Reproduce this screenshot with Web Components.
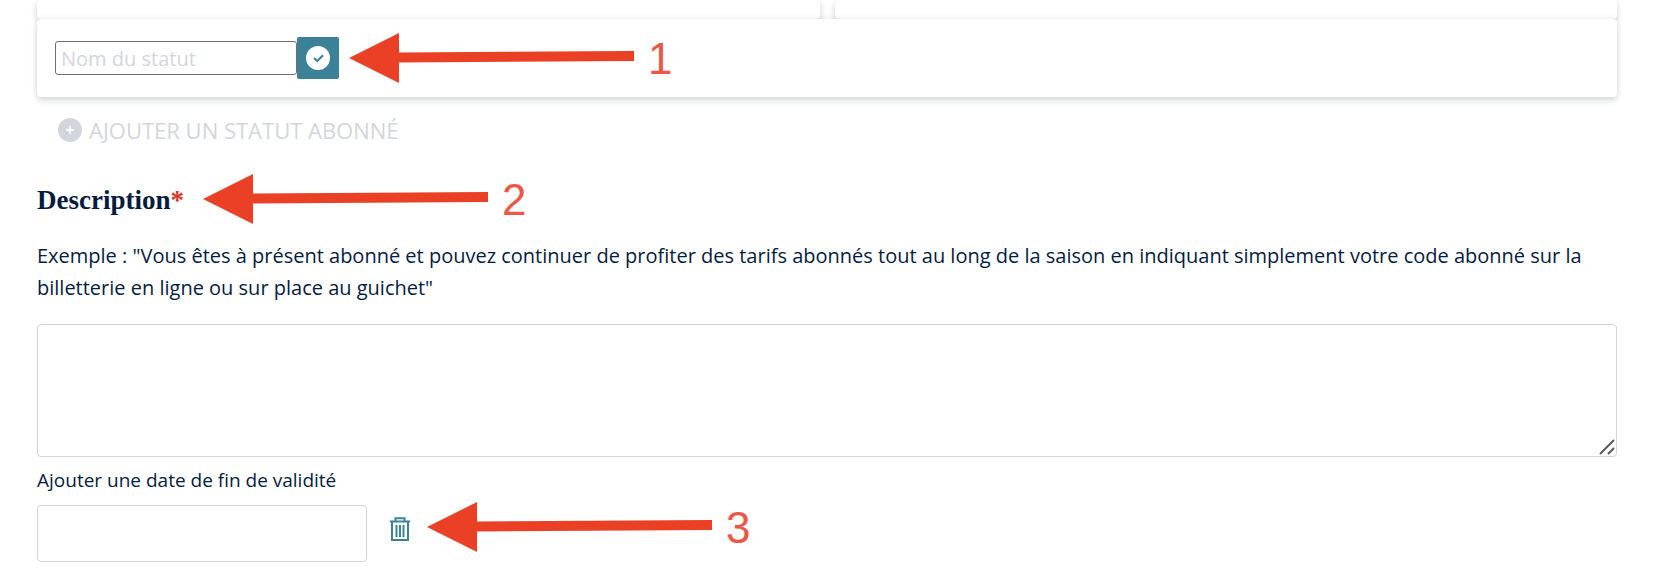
<!DOCTYPE html>
<html lang="fr">
<head>
<meta charset="utf-8">
<meta name="viewport" content="width=device-width, initial-scale=1">
<title>Statuts abonné</title>
<style>
    body{
        margin: 0;
        background: #ffffff;
        color: #051c3f;
        font-family: "Open Sans", "Noto Sans", sans-serif;
        font-size: 20px;
    }
</style>
</head>
<body>
<subscriber-form></subscriber-form>
<script>
'use strict'
const makeTemplate = (html) => {
    const template = document.createElement('template')
    template.innerHTML = html
    return template
}

const cardTemplate = makeTemplate(`
    <style>
        :host{
            display: block;
            position: relative;
            box-sizing: border-box;
            min-height: 19px;
            background: #ffffff;
            border-radius: 4px;
            box-shadow: 0 0 6px rgba(20,35,60,.1), 0 4px 6px rgba(20,35,60,.12);
        }
    </style>
    <slot></slot>
`)
class AppCard extends HTMLElement {
    constructor () {
        super ();
        this.attachShadow({mode:'open'})
        this.shadowRoot.appendChild(cardTemplate.content.cloneNode(true))
    }
}

// red arrow pointing left, followed by the step number
const stepTemplate = makeTemplate(`
    <style>
        :host{
            display: flex;
            align-items: center;
            gap: 14px;
            color: #ee5646;
            font-family: "Liberation Sans", Arial, sans-serif;
            font-size: 44px;
            line-height: 50px;
        }
        svg{
            display: block;
            flex: none;
        }
        span{
            padding-top: 2px;
            line-height: 48px;
        }
    </style>
    <svg width="285" height="50" viewBox="0 0 285 50" aria-hidden="true">
        <path fill="#ea4025" d="M0 25 50 0V19.5L285 18V28L50 29.5V50Z"/>
    </svg>
    <span><slot></slot></span>
`)
class StepArrow extends HTMLElement {
    constructor () {
        super ();
        this.attachShadow({mode:'open'})
        this.shadowRoot.appendChild(stepTemplate.content.cloneNode(true))
    }
}

const statusTemplate = makeTemplate(`
    <style>
        :host{
            display: flex;
            align-items: center;
            padding: 14px 18px;
        }
        input{
            box-sizing: border-box;
            width: 242px;
            height: 34px;
            padding: 0 5px;
            border: 1px solid #6f6f6f;
            border-radius: 3px;
            background: #ffffff;
            color: inherit;
            font: inherit;
            font-weight: 500;
        }
        input::placeholder{
            color: #d2d6dc;
        }
        button{
            display: flex;
            align-items: center;
            justify-content: center;
            width: 42px;
            height: 42px;
            padding: 0;
            border: 0;
            border-radius: 2px;
            background: #3b8299;
            cursor: pointer;
        }
        slot{
            display: block;
            margin-left: 10px;
        }
    </style>
    <input type="text" placeholder="Nom du statut" aria-label="Nom du statut">
    <button type="button" aria-label="Valider">
        <svg width="24" height="24" viewBox="0 0 24 24">
            <circle cx="12" cy="12" r="12" fill="#ffffff"/>
            <path d="M8 12 11.3 15 17 9.3" fill="none" stroke="#3b8299" stroke-width="2"/>
        </svg>
    </button>
    <slot></slot>
`)
class StatusInput extends HTMLElement {
    constructor () {
        super ();
        this.attachShadow({mode:'open'})
        this.shadowRoot.appendChild(statusTemplate.content.cloneNode(true))
    }
}

const addTemplate = makeTemplate(`
    <style>
        :host{
            display: block;
        }
        button{
            display: flex;
            align-items: center;
            gap: 7px;
            padding: 0;
            border: 0;
            background: none;
            color: #d2d6dc;
            font: inherit;
            font-size: 22px;
            line-height: 32px;
            text-transform: uppercase;
            cursor: pointer;
        }
    </style>
    <button type="button">
        <svg width="24" height="24" viewBox="0 0 24 24" aria-hidden="true">
            <circle cx="12" cy="12" r="12" fill="#d2d6dc"/>
            <path d="M12 8V16M8 12H16" stroke="#ffffff" stroke-width="2"/>
        </svg>
        <span><slot></slot></span>
    </button>
`)
class AddButton extends HTMLElement {
    constructor () {
        super ();
        this.attachShadow({mode:'open'})
        this.shadowRoot.appendChild(addTemplate.content.cloneNode(true))
    }
}

const descriptionTemplate = makeTemplate(`
    <style>
        :host{
            display: block;
        }
        .title-row{
            display: flex;
            align-items: center;
            gap: 19px;
        }
        .title{
            padding-top: 2px;
            font-family: "Liberation Serif", "Times New Roman", serif;
            font-size: 27px;
            font-weight: bold;
            line-height: 32px;
        }
        .required{
            color: #dc3327;
        }
        p{
            margin: 16px 0 20px;
            font-weight: 500;
            line-height: 32px;
        }
        .field{
            position: relative;
        }
        textarea{
            display: block;
            box-sizing: border-box;
            width: 100%;
            height: 133px;
            padding: 12px;
            border: 1px solid #d2d3dc;
            border-radius: 4px;
            background: #ffffff;
            color: inherit;
            font: inherit;
            resize: vertical;
        }
        textarea::-webkit-resizer{
            display: none;
        }
        .grip{
            position: absolute;
            right: 2px;
            bottom: 2px;
            pointer-events: none;
        }
    </style>
    <div class="title-row">
        <label class="title" for="description">Description<span class="required">*</span></label>
        <slot name="step"></slot>
    </div>
    <p id="hint"><slot></slot></p>
    <div class="field">
        <textarea id="description" aria-describedby="hint" required></textarea>
        <svg class="grip" width="16" height="16" viewBox="0 0 16 16" aria-hidden="true">
            <path d="M1 15 15 1M9 15 15 9" stroke="#5c5c5c" stroke-width="2"/>
        </svg>
    </div>
`)
class DescriptionField extends HTMLElement {
    constructor () {
        super ();
        this.attachShadow({mode:'open'})
        this.shadowRoot.appendChild(descriptionTemplate.content.cloneNode(true))
    }
}

const dateTemplate = makeTemplate(`
    <style>
        :host{
            display: block;
        }
        label{
            display: block;
            font-size: 19px;
            line-height: 28px;
        }
        .row{
            display: flex;
            align-items: center;
            margin-top: 8px;
        }
        input{
            box-sizing: border-box;
            width: 330px;
            height: 57px;
            padding: 0 12px;
            border: 1px solid #d2d6dc;
            border-radius: 4px;
            background: #ffffff;
            color: inherit;
            font: inherit;
        }
        button{
            display: flex;
            margin: 0 16px 0 22px;
            padding: 0 0 8px;
            border: 0;
            background: none;
            cursor: pointer;
        }
        slot{
            display: block;
            padding-bottom: 12px;
        }
    </style>
    <label for="end-date">Ajouter une date de fin de validité</label>
    <div class="row">
        <input type="text" id="end-date">
        <button type="button" aria-label="Supprimer">
            <svg width="22" height="24" viewBox="0 0 22 24" fill="none" stroke="#3b8299" stroke-width="2">
                <path d="M1 4.5H21"/>
                <path d="M6.5 4V1.2H15.5V4"/>
                <path d="M3 5V23H19V5"/>
                <path d="M7.5 8V20M11 8V20M14.5 8V20"/>
            </svg>
        </button>
        <slot></slot>
    </div>
`)
class EndDateField extends HTMLElement {
    constructor () {
        super ();
        this.attachShadow({mode:'open'})
        this.shadowRoot.appendChild(dateTemplate.content.cloneNode(true))
    }
}

const formTemplate = makeTemplate(`
    <style>
        :host{
            display: block;
            padding: 0 53px 14px 37px;
        }
        .cards{
            display: grid;
            grid-template-columns: 1fr 1fr;
            gap: 15px;
        }
        add-button{
            margin: 17px 0 28px 21px;
        }
        end-date-field{
            margin-top: 9px;
        }
    </style>
    <div class="cards">
        <app-card></app-card>
        <app-card></app-card>
    </div>
    <app-card>
        <status-input><step-arrow>1</step-arrow></status-input>
    </app-card>
    <add-button>Ajouter un statut abonné</add-button>
    <description-field>
        <step-arrow slot="step">2</step-arrow>
        Exemple : "Vous êtes à présent abonné et pouvez continuer de profiter des tarifs abonnés tout au long de la saison en indiquant simplement votre code abonné sur la billetterie en ligne ou sur place au guichet"
    </description-field>
    <end-date-field><step-arrow>3</step-arrow></end-date-field>
`)
class SubscriberForm extends HTMLElement {
    constructor () {
        super ();
        this.attachShadow({mode:'open'})
        this.shadowRoot.appendChild(formTemplate.content.cloneNode(true))
    }
}

window.customElements.define('app-card',AppCard)
window.customElements.define('step-arrow',StepArrow)
window.customElements.define('status-input',StatusInput)
window.customElements.define('add-button',AddButton)
window.customElements.define('description-field',DescriptionField)
window.customElements.define('end-date-field',EndDateField)
window.customElements.define('subscriber-form',SubscriberForm)
</script>
</body>
</html>
